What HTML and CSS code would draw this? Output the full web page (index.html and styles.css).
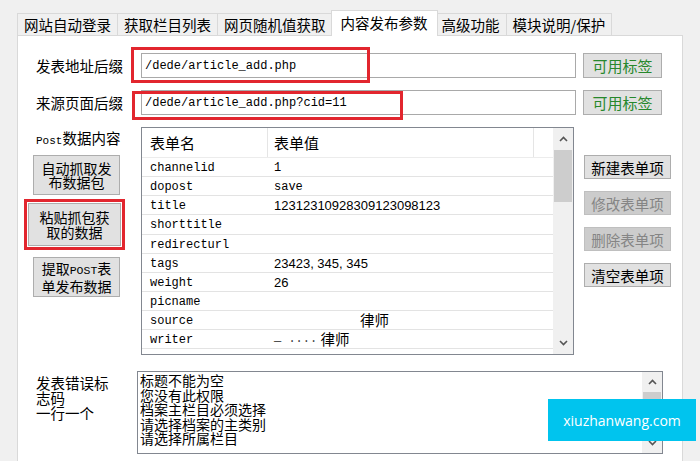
FILE: index.html
```html
<!DOCTYPE html>
<html lang="zh-CN">
<head>
<meta charset="utf-8">
<title>内容发布参数</title>
<link rel="stylesheet" href="styles.css">
</head>
<body>
<div class="window">
  <div class="tabs">
    <div class="tab">网站自动登录</div>
    <div class="tab">获取栏目列表</div>
    <div class="tab">网页随机值获取</div>
    <div class="tab active">内容发布参数</div>
    <div class="tab">高级功能</div>
    <div class="tab">模块说明/保护</div>
  </div>
  <div class="panel">
    <div class="field-row">
      <div class="field-label">发表地址后缀</div>
      <div class="textbox">/dede/article_add.php</div>
      <div class="btn btn-tag">可用标签</div>
      <div class="mark mark-1"></div>
    </div>
    <div class="field-row row-2">
      <div class="field-label">来源页面后缀</div>
      <div class="textbox">/dede/article_add.php?cid=11</div>
      <div class="btn btn-tag">可用标签</div>
      <div class="mark mark-2"></div>
    </div>

    <div class="middle">
      <div class="left-col">
        <div class="post-label"><span class="mono-s">Post</span>数据内容</div>
        <div class="btn btn-big"><span class="btn-text">自动抓取发<br>布数据包</span></div>
        <div class="redbox"><div class="btn btn-fill"><span class="btn-text">粘贴抓包获<br>取的数据</span></div></div>
        <div class="btn btn-big btn-last"><span class="btn-text">提取<span class="mono-b">POST</span>表<br>单发布数据</span></div>
      </div>

      <div class="list">
        <div class="list-main">
          <div class="list-head">
            <div class="hc hc1">表单名</div>
            <div class="hc hc2">表单值</div>
            <div class="hc hc3"></div>
          </div>
          <div class="row"><div class="c1">channelid</div><div class="c2 mono">1</div></div>
          <div class="row"><div class="c1">dopost</div><div class="c2 mono">save</div></div>
          <div class="row"><div class="c1">title</div><div class="c2 sans">12312310928309123098123</div></div>
          <div class="row"><div class="c1">shorttitle</div><div class="c2"></div></div>
          <div class="row"><div class="c1">redirecturl</div><div class="c2"></div></div>
          <div class="row"><div class="c1">tags</div><div class="c2 sans">23423, 345, 345</div></div>
          <div class="row"><div class="c1">weight</div><div class="c2 sans">26</div></div>
          <div class="row"><div class="c1">picname</div><div class="c2"></div></div>
          <div class="row"><div class="c1">source</div><div class="c2 cjk indent">律师</div></div>
          <div class="row"><div class="c1">writer</div><div class="c2 cjk"><span class="blur">— ····</span> 律师</div></div>
          <div class="row"><div class="c1"></div><div class="c2"></div></div>
        </div>
        <div class="vscroll">
          <div class="sb-btn"><svg width="9" height="6" viewBox="0 0 9 6"><path d="M1 5 L4.5 1.5 L8 5" fill="none" stroke="#555" stroke-width="1.6"/></svg></div>
          <div class="sb-thumb"></div>
          <div class="sb-track"></div>
          <div class="sb-btn"><svg width="9" height="6" viewBox="0 0 9 6"><path d="M1 1 L4.5 4.5 L8 1" fill="none" stroke="#555" stroke-width="1.6"/></svg></div>
        </div>
      </div>

      <div class="right-col">
        <div class="btn btn-side">新建表单项</div>
        <div class="btn btn-side disabled">修改表单项</div>
        <div class="btn btn-side disabled">删除表单项</div>
        <div class="btn btn-side">清空表单项</div>
      </div>
    </div>

    <div class="bottom">
      <div class="err-label">发表错误标<br>志码<br>一行一个</div>
      <div class="textarea">
        <div class="ta-text">标题不能为空<br>您没有此权限<br>档案主栏目必须选择<br>请选择档案的主类别<br>请选择所属栏目</div>
        <div class="ta-scroll">
          <div class="sb-btn ta-btn"><svg width="9" height="6" viewBox="0 0 9 6"><path d="M1 5 L4.5 1.5 L8 5" fill="none" stroke="#555" stroke-width="1.6"/></svg></div>
          <div class="sb-thumb ta-thumb"></div>
          <div class="sb-track"></div>
          <div class="sb-btn ta-btn"><svg width="9" height="6" viewBox="0 0 9 6"><path d="M1 1 L4.5 4.5 L8 1" fill="none" stroke="#555" stroke-width="1.6"/></svg></div>
        </div>
      </div>
    </div>
  </div>
</div>
<div class="watermark">xiuzhanwang.com</div>
</body>
</html>
```

FILE: styles.css
```css
html, body {
  margin: 0;
  padding: 0;
}
body {
  width: 700px;
  height: 461px;
  overflow: hidden;
  background: #f0f0f0;
  font-family: "Noto Sans CJK SC", sans-serif;
  color: #000;
  position: relative;
}
.window {
  padding: 10px 0 0 17px;
}
.tabs {
  display: flex;
  align-items: flex-end;
  height: 25px;
}
.tab {
  height: 22px;
  box-sizing: border-box;
  border: 1px solid #d9d9d9;
  border-bottom: none;
  background: #f0f0f0;
  padding: 0 6px;
  font-size: 14.5px;
  line-height: 22px;
  margin-left: -1px;
  white-space: nowrap;
}
.tab:first-child {
  margin-left: 0;
}
.tab.active {
  height: 26px;
  background: #fff;
  margin: 0 -2px -1px -2px;
  padding: 0 9px;
  line-height: 23px;
  position: relative;
  z-index: 1;
}
.panel {
  width: 666px;
  height: 432px;
  box-sizing: border-box;
  border: 1px solid #d9d9d9;
  background: #fff;
  padding: 17px 0 0 18px;
}
.field-row {
  display: flex;
  align-items: center;
  height: 25px;
  position: relative;
}
.row-2 {
  margin-top: 12px;
}
.field-label {
  width: 105px;
  font-size: 14.5px;
  line-height: 25px;
  white-space: nowrap;
}
.textbox {
  width: 435px;
  height: 25px;
  box-sizing: border-box;
  border: 1px solid #a9a9a9;
  padding-left: 3px;
  font-family: "Liberation Mono", monospace;
  font-size: 12px;
  line-height: 24px;
  white-space: nowrap;
}
.btn {
  box-sizing: border-box;
  border: 1px solid #adadad;
  background: #e1e1e1;
  display: flex;
  align-items: center;
  justify-content: center;
  text-align: center;
  white-space: nowrap;
}
.btn-text {
  display: block;
  text-align: center;
}
.btn-tag {
  margin-left: 7px;
  width: 79px;
  height: 25px;
  color: #27882c;
  font-size: 15px;
}
.mark {
  position: absolute;
  box-sizing: border-box;
  border: 3px solid #e2262e;
}
.mark-1 {
  left: 95px;
  top: -6px;
  width: 239px;
  height: 36px;
}
.mark-2 {
  left: 96px;
  top: 1px;
  width: 271px;
  height: 29px;
}
.middle {
  display: flex;
  margin-top: 12px;
  margin-left: -3px;
}
.left-col {
  width: 87px;
  display: flex;
  flex-direction: column;
}
.post-label {
  height: 28px;
  box-sizing: border-box;
  padding: 3px 0 0 3px;
  font-size: 14.5px;
  line-height: 16px;
  white-space: nowrap;
}
.mono-s {
  font-family: "Liberation Mono", monospace;
  font-size: 11px;
}
.mono-b {
  font-family: "Liberation Mono", monospace;
  font-size: 11.5px;
}
.btn-big {
  height: 40px;
  font-size: 14px;
  line-height: 14.5px;
}
.redbox {
  margin-top: 4px;
  margin-left: -9px;
  width: 101px;
  height: 51px;
  box-sizing: border-box;
  border: 3px solid #e2262e;
  padding: 1px;
  display: flex;
}
.btn-fill {
  flex: 1;
  font-size: 14px;
  line-height: 14.5px;
}
.btn-last {
  margin-top: 7px;
}
.list {
  margin-left: 21px;
  width: 433px;
  height: 228px;
  box-sizing: border-box;
  border: 1px solid #828790;
  background: #fff;
  display: flex;
  overflow: hidden;
}
.list-main {
  flex: 1;
  overflow: hidden;
}
.list-head {
  display: flex;
  height: 30px;
  box-sizing: border-box;
  border-bottom: 1px solid #ececec;
}
.hc {
  box-sizing: border-box;
  font-size: 15px;
  line-height: 30px;
  border-right: 1px solid #e5e5e5;
  white-space: nowrap;
}
.hc1 {
  width: 126px;
  padding-left: 8px;
}
.hc2 {
  width: 266px;
  padding-left: 6px;
}
.hc3 {
  flex: 1;
  border-right: none;
}
.row {
  display: flex;
  height: 19.15px;
  box-sizing: border-box;
  border-bottom: 1px solid #e3e3e3;
  white-space: nowrap;
}
.c1 {
  width: 126px;
  box-sizing: border-box;
  padding-left: 8px;
  font-family: "Liberation Mono", monospace;
  font-size: 12px;
  line-height: 20px;
}
.c2 {
  flex: 1;
  padding-left: 6px;
  font-family: "Liberation Mono", monospace;
  font-size: 12px;
  line-height: 20px;
}
.c2.sans {
  font-family: "Liberation Sans", sans-serif;
  font-size: 13px;
}
.c2.cjk {
  font-family: "Noto Sans CJK SC", sans-serif;
  font-size: 14.5px;
  line-height: 18px;
}
.indent {
  padding-left: 92px;
}
.blur {
  font-family: "Liberation Mono", monospace;
  color: #444;
  font-size: 12px;
}
.vscroll {
  width: 20px;
  background: #f0f0f0;
  display: flex;
  flex-direction: column;
}
.sb-btn {
  height: 22px;
  display: flex;
  align-items: center;
  justify-content: center;
}
.sb-thumb {
  height: 52px;
  margin: 0 1px;
  background: #cdcdcd;
}
.sb-track {
  flex: 1;
}
.right-col {
  margin-left: 10px;
  width: 87px;
  display: flex;
  flex-direction: column;
  gap: 12px;
  padding-top: 28px;
}
.btn-side {
  height: 24px;
  font-size: 14.5px;
}
.btn.disabled {
  background: #cccccc;
  border-color: #bfbfbf;
  color: #858585;
}
.bottom {
  display: flex;
  margin-top: 16px;
}
.err-label {
  width: 101px;
  font-size: 14.5px;
  line-height: 15px;
  padding-top: 4px;
}
.textarea {
  width: 526px;
  height: 83px;
  box-sizing: border-box;
  border: 1px solid #828790;
  display: flex;
  background: #fff;
}
.ta-text {
  flex: 1;
  padding: 1px 0 0 2px;
  font-size: 14px;
  line-height: 14.5px;
}
.ta-scroll {
  width: 20px;
  background: #f0f0f0;
  display: flex;
  flex-direction: column;
}
.ta-btn {
  height: 20px;
}
.ta-thumb {
  height: 30px;
}
.watermark {
  position: absolute;
  left: 548px;
  top: 399px;
  width: 148px;
  height: 42px;
  background: #00c4ee;
  color: #fff;
  font-family: "Open Sans", sans-serif;
  font-size: 14px;
  display: flex;
  align-items: center;
  justify-content: center;
}
```
